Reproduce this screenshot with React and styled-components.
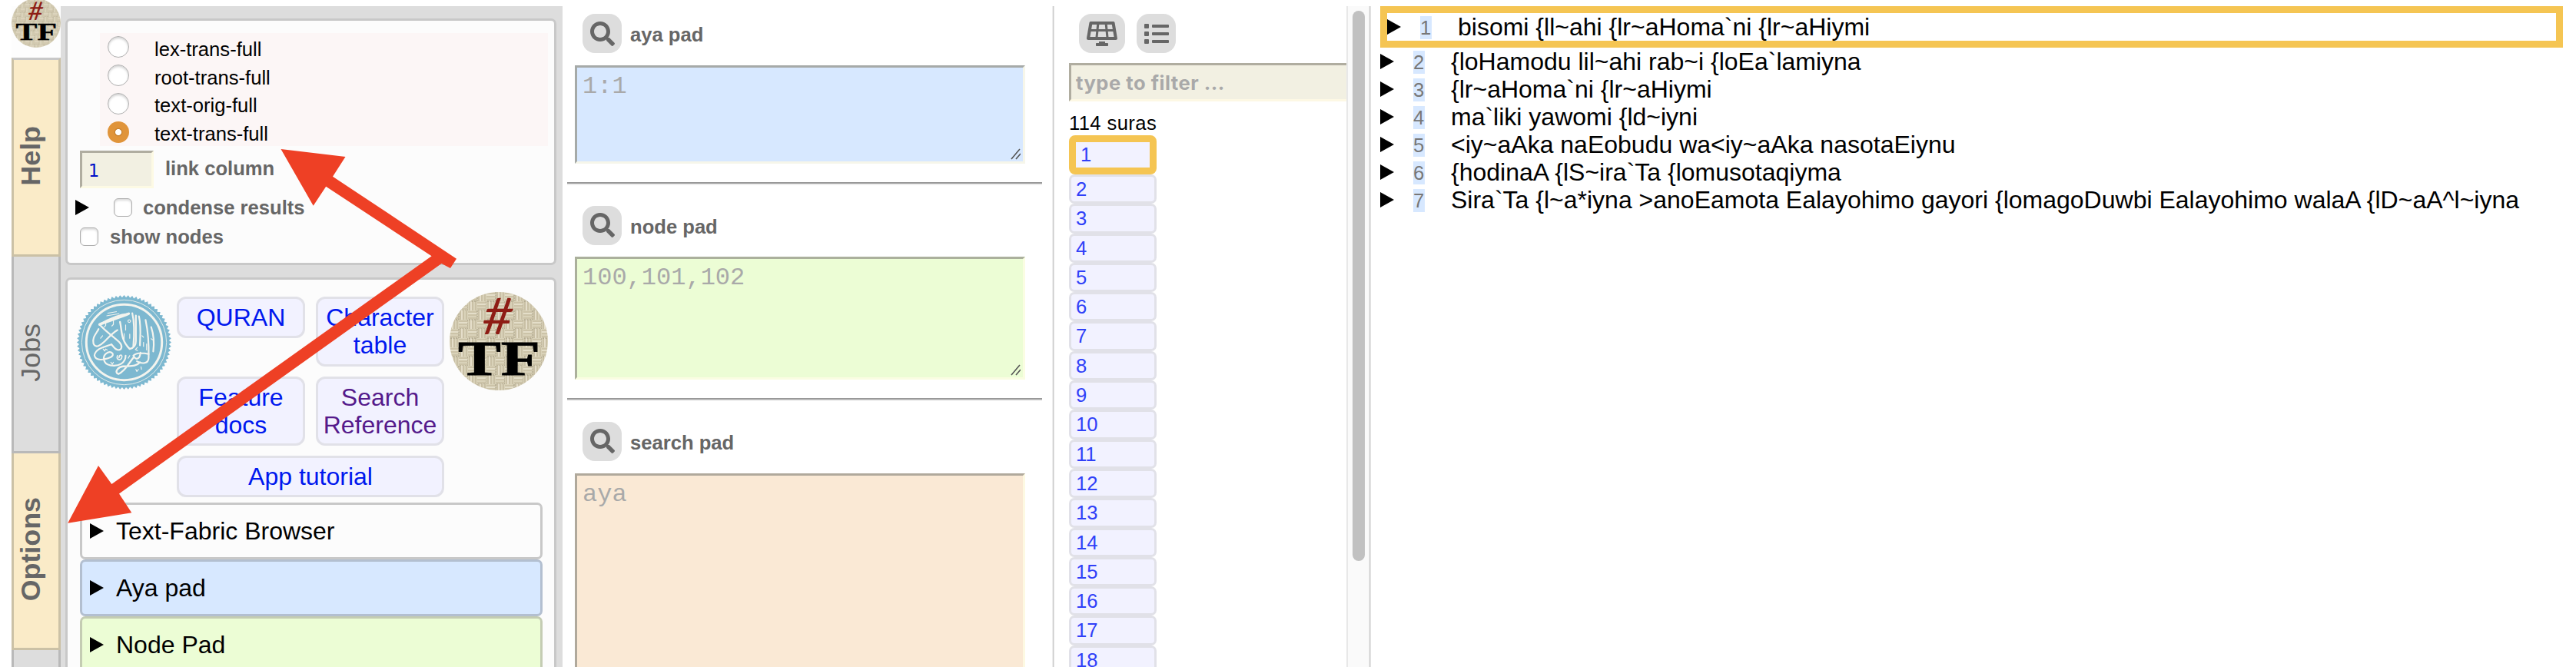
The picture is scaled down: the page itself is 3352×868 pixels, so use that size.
import React from "react";
import styled, { createGlobalStyle } from "styled-components";
import { FaSearch, FaSolarPanel, FaList } from "react-icons/fa";

const GlobalStyle = createGlobalStyle`
  * { box-sizing: border-box; }
  body {
    margin: 0;
    background: #fff;
    color: #000;
    font-family: "Liberation Sans", Arial, Helvetica, sans-serif;
    font-size: 25.6px;
    overflow: hidden;
  }
`;

const Page = styled.div`
  position: relative;
  display: flex;
  height: 868px;
  padding: 8px 0 0 15px;
  overflow: hidden;
`;

/* ---------- tab rail ---------- */

const Rail = styled.nav`
  width: 64px;
  flex: none;
  display: flex;
  flex-direction: column;
`;

const RailHome = styled.div`
  height: 67px;
  flex: none;
  background: #fdfdfd;
  svg {
    display: block;
    margin-top: -10px;
  }
`;

const Tab = styled.div`
  flex: none;
  height: ${(p) => p.$height}px;
  display: flex;
  align-items: center;
  justify-content: center;
  background: ${(p) => (p.$active ? "#faebc8" : "#ddd")};
  border: solid ${(p) => (p.$active ? "#cbc1a6" : "#b9b9b9")};
  border-width: ${(p) => (p.$first ? "3px" : "0")} 3px 3px;
  border-top-color: #c8c8c8;
  color: #666;
  font-size: 35.84px;
  font-weight: ${(p) => (p.$active ? 700 : 400)};
  line-height: 40px;
  span {
    writing-mode: vertical-rl;
    transform: rotate(180deg);
    margin: 0 14px 4px 0;
  }
`;

/* ---------- side panel ---------- */

const SidePanel = styled.aside`
  width: 653px;
  flex: none;
  background: #ddd;
  padding: 16px 8px 0 6px;
`;

const Card = styled.section`
  height: ${(p) => p.$height}px;
  margin-bottom: 16px;
  padding: ${(p) => p.$pad};
  border: 3px solid #c8c8c8;
  border-radius: 7px;
  background: #fcfcfc;
`;

const FormatList = styled.div`
  width: 583px;
  margin-left: 33px;
  background: #fcf6f6;
`;

const FormatRow = styled.label`
  display: flex;
  align-items: center;
  height: 36.75px;
  padding-left: 10px;
  span {
    margin-left: 33px;
    padding-top: 5px;
    line-height: 30px;
  }
`;

const Radio = styled.i`
  width: 28px;
  height: 28px;
  border-radius: 50%;
  background: ${(p) => (p.$on ? "radial-gradient(circle, #fff 3.6px, #c58030 4.4px, #e0943a 6px)" : "#fff")};
  border: ${(p) => (p.$on ? "0" : "1px solid #b0b0b0")};
  box-shadow: ${(p) => (p.$on ? "none" : "inset 0 2px 3px rgba(0,0,0,.18)")};
`;

const OptionRow = styled.div`
  display: flex;
  align-items: center;
  height: ${(p) => p.$height}px;
  margin-top: ${(p) => p.$top || 0}px;
  padding-left: ${(p) => p.$indent}px;
  color: #666;
  font-weight: 700;
`;

const OptionLabel = styled.span`
  margin-left: ${(p) => p.$gap}px;
  padding-bottom: ${(p) => p.$lift || 0}px;
  line-height: 30px;
`;

const NumberField = styled.div`
  width: 96px;
  height: 49px;
  padding: 8px 0 0 8px;
  background: #f2f0e2;
  border: 3px solid;
  border-color: #b0ada0 #fdfae4 #fdfae4 #b0ada0;
  color: #0010c8;
  font: 400 22.5px/30px "DejaVu Sans", sans-serif;
`;

const Checkbox = styled.i`
  width: 24px;
  height: 24px;
  margin-left: ${(p) => p.$gap || 0}px;
  border: 1px solid #adadad;
  border-radius: 6px;
  background: #fff;
  box-shadow: inset 0 2px 3px rgba(0, 0, 0, 0.15);
`;

const Caret = styled.i`
  width: 0;
  height: 0;
  border: solid transparent;
  border-width: 10.3px 0 10.3px 18.5px;
  border-left-color: #000;
`;

const LinkArea = styled.div`
  display: flex;
  height: 274px;
`;

const LogoSlot = styled.div`
  width: ${(p) => p.$width}px;
  padding: ${(p) => p.$pad};
  svg {
    display: block;
  }
`;

const LinkGrid = styled.div`
  width: 348px;
  display: grid;
  grid-template-columns: 167px 167px;
  column-gap: 14px;
  row-gap: 13px;
  align-content: start;
  align-items: start;
  padding-top: 6px;
`;

const LinkButton = styled.a`
  grid-column: ${(p) => (p.$wide ? "1 / 3" : "auto")};
  padding: 6px 0;
  border: 3px solid #e1e1e8;
  border-radius: 12px;
  background: #f2f2ff;
  color: ${(p) => (p.$visited ? "#551a8b" : "#0018ee")};
  font-size: 32px;
  line-height: 36.3px;
  text-align: center;
`;

const Fold = styled.div`
  display: flex;
  align-items: center;
  height: 74.1px;
  margin: 0 15px 0 16px;
  padding-left: 10px;
  border: 3px solid ${(p) => p.$edge};
  border-radius: 7px;
  background: ${(p) => p.$fill};
  font-size: 32px;
  line-height: 36px;
  span {
    margin-left: 16px;
    padding-bottom: 1px;
  }
`;

/* ---------- query pads ---------- */

const Pads = styled.main`
  width: 637px;
  flex: none;
  padding-left: 6px;
`;

const PadHead = styled.div`
  display: flex;
  height: 76.7px;
  padding: 10px 0 0 20px;
  color: #666;
  font-weight: 700;
  span {
    margin: 12px 0 0 11px;
    line-height: 30px;
  }
`;

const IconButton = styled.button`
  width: ${(p) => p.$width || 51}px;
  height: 51px;
  padding: 0;
  display: flex;
  align-items: center;
  justify-content: center;
  border: 0;
  border-radius: 16px;
  background: #ddd;
  color: #666;
`;

const PadBox = styled.div`
  position: relative;
  width: 586px;
  height: ${(p) => p.$height}px;
  margin-left: 10px;
  padding: 6px 7px;
  background: ${(p) => p.$fill};
  border: 3px solid;
  border-color: ${(p) => p.$dark} ${(p) => p.$light} ${(p) => p.$light} ${(p) => p.$dark};
  color: #a9a9a9;
  font: 400 32px/37px "Liberation Mono", monospace;
  svg {
    position: absolute;
    right: 3px;
    bottom: 2px;
  }
`;

const Rule = styled.div`
  width: 618px;
  height: 4px;
  margin: 24px 0 ${(p) => p.$after}px;
  border-top: 2px solid #999;
  border-bottom: 2px solid #eee;
`;

const Divider = styled.div`
  width: 3px;
  flex: none;
  background: #ccc;
  border-left: 1px solid #eee;
  border-right: 1px solid #e4e4e4;
`;

/* ---------- sections ---------- */

const Sections = styled.div`
  width: 380px;
  flex: none;
  padding-left: 19px;
  overflow: hidden;
`;

const ModeButtons = styled.div`
  display: flex;
  gap: 15px;
  padding: 10px 0 0 13px;
  height: 74px;
`;

const FilterField = styled.div`
  width: 400px;
  height: 50px;
  padding-left: 6px;
  background: #f2f0e2;
  border: 3px solid;
  border-color: #b0ada0 #fdf8e4 #fdf8e4 #b0ada0;
  color: #a9a9a9;
  font: 700 25.6px/45px Inter, sans-serif;
  letter-spacing: 0.5px;
`;

const Count = styled.div`
  margin-top: 13px;
  height: 31px;
  line-height: 30px;
  letter-spacing: 0.4px;
`;

const Sura = styled.div`
  width: 114px;
  height: ${(p) => (p.$current ? 51 : 38.3)}px;
  padding-left: 6px;
  border: ${(p) => (p.$current ? "9px solid #f5c553" : "3px solid #e1e1e8")};
  border-radius: ${(p) => (p.$current ? 8 : 7)}px;
  background: #f2f2ff;
  color: #3040f8;
  line-height: ${(p) => (p.$current ? 32 : 32)}px;
`;

const Track = styled.div`
  width: 29px;
  flex: none;
  padding: 6px 0 0 6px;
  background: #fafafa;
  border-left: 2px solid #e8e8e8;
`;

const Thumb = styled.div`
  width: 16px;
  height: 716px;
  border-radius: 8px;
  background: #c1c1c1;
`;

/* ---------- passages ---------- */

const Passages = styled.div`
  flex: 1;
  padding-left: 12px;
`;

const Verse = styled.div`
  display: flex;
  align-items: center;
  width: 1539px;
  height: ${(p) => (p.$current ? 54 : 36)}px;
  border: ${(p) => (p.$current ? "9px solid #f5c553" : "0")};
  font-size: 32px;
  line-height: 36px;
  white-space: pre;
  span {
    margin-left: 34px;
    padding-bottom: 1px;
  }
`;

const VerseNumber = styled.a`
  width: 15px;
  height: 30px;
  margin: 2px 0 0 25px;
  background: #d7e8ff;
  color: #777;
  font-size: 25.6px;
  line-height: 31px;
`;

/* Annotation drawn across several panels */
const Annotation = styled.svg`
  position: absolute;
  left: 0;
  top: 0;
`;

function FabricLogo({ size, id }) {
  return (
    <svg width={size} height={size} viewBox="0 0 128 128">
      <defs>
        <pattern id={id} width="24" height="24" patternUnits="userSpaceOnUse">
          <rect width="24" height="24" fill="#d9d2b9" />
          <path d="M0 2H12M0 6H12M0 10H12M12 14H24M12 18H24M12 22H24" stroke="#bfb597" strokeWidth="1" />
          <path d="M14 0V12M18 0V12M22 0V12M2 12V24M6 12V24M10 12V24" stroke="#b9af91" strokeWidth="1" />
          <path d="M0 4H12M12 16H24M16 0V12M4 12V24" stroke="#e8e2ce" strokeWidth="1.6" />
          <path d="M12 0V12H0M24 12V24H12" fill="none" stroke="#9f977d" strokeWidth="1" strokeDasharray="2 1.5" />
        </pattern>
      </defs>
      <circle cx="64" cy="64" r="64" fill={`url(#${id})`} />
      <text transform="translate(40 55) skewX(-8)" fontFamily="Lato, sans-serif" fontSize="66" fontWeight="400" fill="#8e1c14" textLength="40" lengthAdjust="spacingAndGlyphs">#</text>
      <text x="11" y="108" fontFamily="'Liberation Serif', serif" fontSize="64" fontWeight="700" fill="#000" stroke="#000" strokeWidth="0.8" textLength="107" lengthAdjust="spacingAndGlyphs">TF</text>
    </svg>
  );
}

const rim = Array.from({ length: 144 }, (_, i) => {
  const a = (i / 144) * Math.PI * 2;
  const r = i % 2 ? 176 : 185;
  return `${(185 + r * Math.cos(a)).toFixed(1)},${(185 + r * Math.sin(a)).toFixed(1)}`;
}).join(" ");

function QuranLogo() {
  return (
    <svg width="123" height="123" viewBox="0 0 370 370">
      <polygon points={rim} fill="#7db8d0" />
      <g fill="none" stroke="#f4f4ee">
        <circle cx="185" cy="185" r="166" strokeWidth="2.5" />
        <circle cx="185" cy="185" r="148" strokeWidth="9" />
      </g>
      <g transform="translate(-15 -25)" fill="none" stroke="#f4f4ee" strokeWidth="6.5" strokeLinecap="round" strokeLinejoin="round">
        <path d="M218 98 C190 100 150 112 104 140 C125 165 155 185 182 210 C196 225 190 240 178 240 C165 240 158 225 150 218" />
        <path d="M104 140 C120 132 185 112 218 98" strokeWidth="10" />
        <path d="M100 158 C92 175 74 190 80 215 C88 235 108 222 122 208 C142 188 156 172 174 162" />
        <path d="M136 96L170 90M132 106L180 98" strokeWidth="3" />
        <path d="M184 130C192 165 186 200 222 236C240 232 246 220 246 205V105" strokeWidth="7" />
        <path d="M232 96C240 130 240 180 236 225" />
        <path d="M258 108C268 150 262 195 262 222" />
        <path d="M284 122C292 160 298 200 296 270C296 294 270 296 250 284" />
        <path d="M306 150C316 180 318 215 314 246" />
        <path d="M150 218C120 228 86 236 84 262C90 284 120 280 148 268C166 258 150 244 136 250C112 262 116 294 146 300C180 306 206 290 206 262" />
        <path d="M296 256C270 250 246 252 236 262C246 282 262 276 264 250" />
        <path d="M236 270C218 292 206 322 178 334C160 328 176 306 196 304C226 302 246 306 262 288" strokeWidth="7" />
        <path d="M174 262C168 276 184 284 190 272C196 258 182 254 180 270" strokeWidth="5" />
        <g strokeWidth="3.5">
          <path d="M128 128v16l-6 6M158 124v16l-6 6M206 142v20M220 122a5 5 0 1 0 .1 0M116 184l-8 10M118 236l6 8 4-8 6 4M148 288l6 8 4-8M246 316l4 8 6-8M266 306l2 10M252 230l-8 8 8 4M222 262l-6 10M200 176v22M270 184l6 6M306 196l6 4M222 178v16M288 240v-24M276 210v16" />
        </g>
      </g>
    </svg>
  );
}

function Grip() {
  return (
    <svg width="13" height="15" viewBox="0 0 13 15">
      <path d="M1 14L12 1M7 14L13 7" stroke="#555" strokeWidth="1.6" fill="none" />
    </svg>
  );
}

const formats = ["lex-trans-full", "root-trans-full", "text-orig-full", "text-trans-full"];

const pads = [
  { name: "aya pad", hint: "1:1", height: 128, fill: "#d7e8ff", dark: "#a6aaa8", light: "#f6f6ea", after: 17 },
  { name: "node pad", hint: "100,101,102", height: 159.5, fill: "#ecfdd5", dark: "#abb09c", light: "#fafde2", after: 17 },
  { name: "search pad", hint: "aya", height: 300, fill: "#fae9d5", dark: "#b0a99c", light: "#fdf9e2" },
];

const verses = [
  "bisomi {ll~ahi {lr~aHoma`ni {lr~aHiymi",
  "{loHamodu lil~ahi rab~i {loEa`lamiyna",
  "{lr~aHoma`ni {lr~aHiymi",
  "ma`liki yawomi {ld~iyni",
  "<iy~aAka naEobudu wa<iy~aAka nasotaEiynu",
  "{hodinaA {lS~ira`Ta {lomusotaqiyma",
  "Sira`Ta {l~a*iyna >anoEamota Ealayohimo gayori {lomagoDuwbi Ealayohimo walaA {lD~aA^l~iyna",
];

export default function App() {
  return (
    <Page>
      <GlobalStyle />
      <Rail>
        <RailHome>
          <FabricLogo size={64} id="weave-small" />
        </RailHome>
        <Tab $active $first $height={259}><span>Help</span></Tab>
        <Tab $height={256}><span>Jobs</span></Tab>
        <Tab $active $height={256}><span>Options</span></Tab>
        <Tab $height={256} />
      </Rail>

      <SidePanel>
        <Card $height={321} $pad="16px 0 0 9px">
          <FormatList>
            {formats.map((f, i) => (
              <FormatRow key={f}>
                <Radio $on={i === 3} />
                <span>{f}</span>
              </FormatRow>
            ))}
          </FormatList>
          <OptionRow $height={49} $top={6} $indent={7}>
            <NumberField>1</NumberField>
            <OptionLabel $gap={15} $lift={4}>link column</OptionLabel>
          </OptionRow>
          <OptionRow $height={38} $top={6} $indent={1}>
            <Caret />
            <Checkbox $gap={32} />
            <OptionLabel $gap={14} $lift={1}>condense results</OptionLabel>
          </OptionRow>
          <OptionRow $height={38} $indent={7}>
            <Checkbox />
            <OptionLabel $gap={15} $lift={1}>show nodes</OptionLabel>
          </OptionRow>
        </Card>

        <Card $height={560} $pad="16px 0 0">
          <LinkArea>
            <LogoSlot $width={142} $pad="4px 0 0 12px"><QuranLogo /></LogoSlot>
            <LinkGrid>
              <LinkButton>QURAN</LinkButton>
              <LinkButton>Character<br />table</LinkButton>
              <LinkButton>Feature<br />docs</LinkButton>
              <LinkButton $visited>Search<br />Reference</LinkButton>
              <LinkButton $wide>App tutorial</LinkButton>
            </LinkGrid>
            <LogoSlot $width={136} $pad="0 0 0 7px"><FabricLogo size={128} id="weave-large" /></LogoSlot>
          </LinkArea>
          <Fold $edge="#c8c8c8" $fill="#fcfcfc"><Caret /><span>Text-Fabric Browser</span></Fold>
          <Fold $edge="#b3bfd0" $fill="#d7e8ff"><Caret /><span>Aya pad</span></Fold>
          <Fold $edge="#c4ccb3" $fill="#ecfdd5"><Caret /><span>Node Pad</span></Fold>
        </Card>
      </SidePanel>

      <Pads>
        {pads.map((p) => (
          <React.Fragment key={p.name}>
            <PadHead>
              <IconButton><FaSearch size={32} /></IconButton>
              <span>{p.name}</span>
            </PadHead>
            <PadBox $height={p.height} $fill={p.fill} $dark={p.dark} $light={p.light}>
              {p.hint}
              <Grip />
            </PadBox>
            {p.after && <Rule $after={p.after} />}
          </React.Fragment>
        ))}
      </Pads>
      <Divider />

      <Sections>
        <ModeButtons>
          <IconButton $width={60}><FaSolarPanel size={40} /></IconButton>
          <IconButton><FaList size={32} /></IconButton>
        </ModeButtons>
        <FilterField>type to filter ...</FilterField>
        <Count>114 suras</Count>
        {Array.from({ length: 18 }, (_, i) => (
          <Sura key={i} $current={i === 0}>{i + 1}</Sura>
        ))}
      </Sections>
      <Track><Thumb /></Track>
      <Divider />

      <Passages>
        {verses.map((v, i) => (
          <Verse key={v} $current={i === 0}>
            <Caret />
            <VerseNumber>{i + 1}</VerseNumber>
            <span>{v}</span>
          </Verse>
        ))}
      </Passages>

      <Annotation width="740" height="868" viewBox="0 0 740 868">
        <path
          fill="#ee4025"
          d="M365.5 194L449.5 204L433 229.7L594 336.7L586 349L574.5 343L155 642.4L171.3 667.3L88.2 680.8L128 606L145.3 629.9L561.6 333.3L424.2 242.7L407.7 267.7Z"
        />
      </Annotation>
    </Page>
  );
}
